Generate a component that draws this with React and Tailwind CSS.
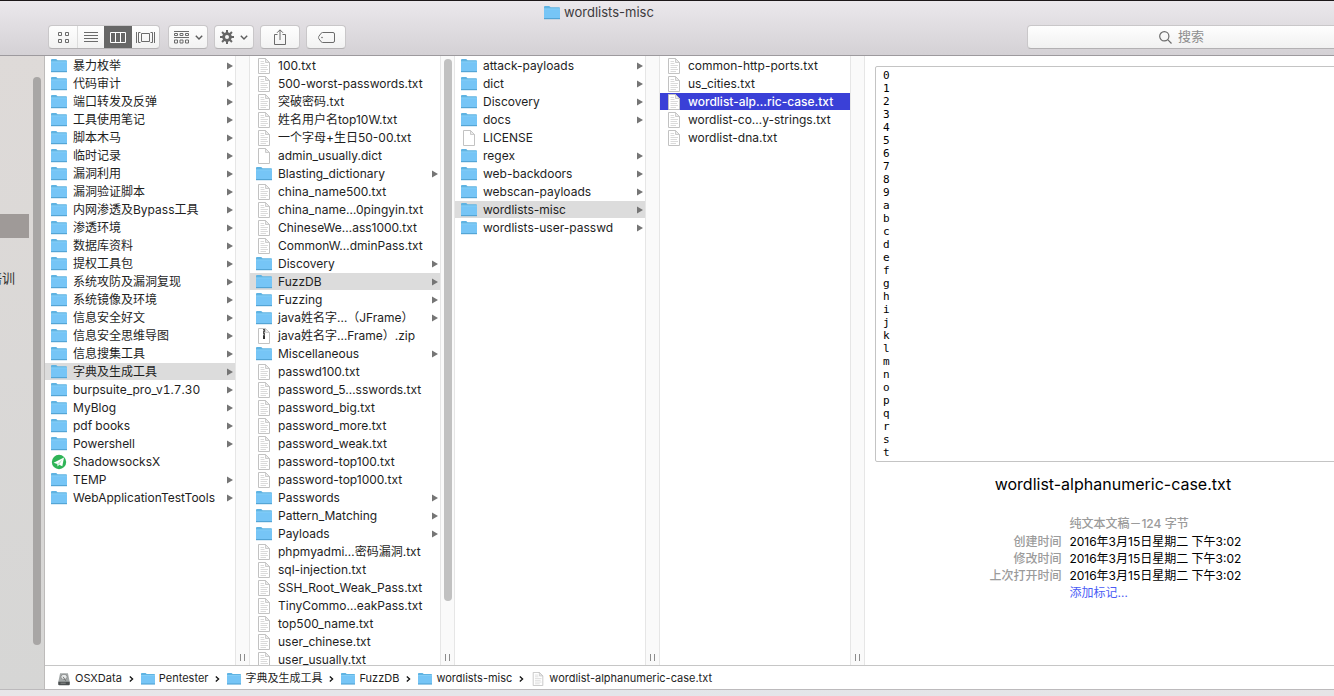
import clsx from "clsx";

const rootItems = [
  { name: "暴力枚举", kind: "folder" },
  { name: "代码审计", kind: "folder" },
  { name: "端口转发及反弹", kind: "folder" },
  { name: "工具使用笔记", kind: "folder" },
  { name: "脚本木马", kind: "folder" },
  { name: "临时记录", kind: "folder" },
  { name: "漏洞利用", kind: "folder" },
  { name: "漏洞验证脚本", kind: "folder" },
  { name: "内网渗透及Bypass工具", kind: "folder" },
  { name: "渗透环境", kind: "folder" },
  { name: "数据库资料", kind: "folder" },
  { name: "提权工具包", kind: "folder" },
  { name: "系统攻防及漏洞复现", kind: "folder" },
  { name: "系统镜像及环境", kind: "folder" },
  { name: "信息安全好文", kind: "folder" },
  { name: "信息安全思维导图", kind: "folder" },
  { name: "信息搜集工具", kind: "folder" },
  { name: "字典及生成工具", kind: "folder", open: true },
  { name: "burpsuite_pro_v1.7.30", kind: "folder" },
  { name: "MyBlog", kind: "folder" },
  { name: "pdf books", kind: "folder" },
  { name: "Powershell", kind: "folder" },
  { name: "ShadowsocksX", kind: "app" },
  { name: "TEMP", kind: "folder" },
  { name: "WebApplicationTestTools", kind: "folder" },
];

const dictItems = [
  { name: "100.txt", kind: "text" },
  { name: "500-worst-passwords.txt", kind: "text" },
  { name: "突破密码.txt", kind: "text" },
  { name: "姓名用户名top10W.txt", kind: "text" },
  { name: "一个字母+生日50-00.txt", kind: "text" },
  { name: "admin_usually.dict", kind: "blank" },
  { name: "Blasting_dictionary", kind: "folder" },
  { name: "china_name500.txt", kind: "text" },
  { name: "china_name…0pingyin.txt", kind: "text" },
  { name: "ChineseWe…ass1000.txt", kind: "text" },
  { name: "CommonW…dminPass.txt", kind: "text" },
  { name: "Discovery", kind: "folder" },
  { name: "FuzzDB", kind: "folder", open: true },
  { name: "Fuzzing", kind: "folder" },
  { name: "java姓名字…（JFrame）", kind: "folder" },
  { name: "java姓名字…Frame）.zip", kind: "zip" },
  { name: "Miscellaneous", kind: "folder" },
  { name: "passwd100.txt", kind: "text" },
  { name: "password_5…sswords.txt", kind: "text" },
  { name: "password_big.txt", kind: "text" },
  { name: "password_more.txt", kind: "text" },
  { name: "password_weak.txt", kind: "text" },
  { name: "password-top100.txt", kind: "text" },
  { name: "password-top1000.txt", kind: "text" },
  { name: "Passwords", kind: "folder" },
  { name: "Pattern_Matching", kind: "folder" },
  { name: "Payloads", kind: "folder" },
  { name: "phpmyadmi…密码漏洞.txt", kind: "text" },
  { name: "sql-injection.txt", kind: "text" },
  { name: "SSH_Root_Weak_Pass.txt", kind: "text" },
  { name: "TinyCommo…eakPass.txt", kind: "text" },
  { name: "top500_name.txt", kind: "text" },
  { name: "user_chinese.txt", kind: "text" },
  { name: "user_usually.txt", kind: "text" },
];

const fuzzItems = [
  { name: "attack-payloads", kind: "folder" },
  { name: "dict", kind: "folder" },
  { name: "Discovery", kind: "folder" },
  { name: "docs", kind: "folder" },
  { name: "LICENSE", kind: "blank" },
  { name: "regex", kind: "folder" },
  { name: "web-backdoors", kind: "folder" },
  { name: "webscan-payloads", kind: "folder" },
  { name: "wordlists-misc", kind: "folder", open: true },
  { name: "wordlists-user-passwd", kind: "folder" },
];

const miscItems = [
  { name: "common-http-ports.txt", kind: "text" },
  { name: "us_cities.txt", kind: "text" },
  { name: "wordlist-alp…ric-case.txt", kind: "text", selected: true },
  { name: "wordlist-co…y-strings.txt", kind: "text" },
  { name: "wordlist-dna.txt", kind: "text" },
];

const pathItems = [
  { name: "OSXData", kind: "disk" },
  { name: "Pentester", kind: "folder" },
  { name: "字典及生成工具", kind: "folder" },
  { name: "FuzzDB", kind: "folder" },
  { name: "wordlists-misc", kind: "folder" },
  { name: "wordlist-alphanumeric-case.txt", kind: "text" },
];

const fileInfo = [
  ["创建时间", "2016年3月15日星期二 下午3:02"],
  ["修改时间", "2016年3月15日星期二 下午3:02"],
  ["上次打开时间", "2016年3月15日星期二 下午3:02"],
];

const previewLines = "0123456789abcdefghijklmnopqrst".split("");

function FolderIcon() {
  return (
    <svg viewBox="0 0 16 16" className="size-full">
      <path d="M0 2Q0 1 1 1H5.2L6.6 2.2H15Q16 2.2 16 3.2V14H0Z" fill="#5fb3e2" />
      <path d="M0 4H16V13.5H0Z" fill="#76c5f6" />
      <path d="M0 3.5H16V4.3H0Z" fill="#8ed4fb" />
      <path d="M0 13.2H16V14.2H0Z" fill="#4f9fd0" />
    </svg>
  );
}

function PageIcon({ kind }) {
  return (
    <svg viewBox="0 0 16 16" className="size-full">
      <path d="M2.5.5H9.5L13.5 4.5V15.5H2.5Z" fill="#fff" stroke="#c2c2c2" />
      <path d="M9.5.5V4.5H13.5Z" fill="#ececec" stroke="#c2c2c2" strokeWidth=".8" />
      {kind === "text" && (
        <path d="M4.5 3.5H8M4.5 5.5H8.5M4.5 7.5H12M4.5 9.5H11M4.5 11.5H12M4.5 13.5H10" stroke="#dadada" />
      )}
      {kind === "zip" && (
        <>
          <path d="M8 1V10" stroke="#555" strokeWidth="2" />
          <path d="M7 2.5H8M8 4.5H9M7 6.5H8M8 8.5H9" stroke="#bbb" strokeWidth=".8" />
          <path d="M7 8H9V11H7Z" fill="#333" />
        </>
      )}
    </svg>
  );
}

function AppIcon() {
  return (
    <svg viewBox="0 0 16 16" className="size-full">
      <circle cx="8" cy="8" r="7.2" fill="#2fb457" />
      <path d="M2.6 8.8 13 3.4 11.3 12.2 8.2 10.8 6.6 12.6 6.3 9.9Z" fill="#fff" />
      <path d="M6.3 9.9 11.6 5.1 8.2 10.8" fill="#bfe8ca" />
    </svg>
  );
}

function DiskIcon() {
  return (
    <svg viewBox="0 0 16 16" className="size-full">
      <path d="M3.5 1.5H12.5L14.5 11V14.5H1.5V11Z" fill="#a3a8a8" />
      <path d="M1.5 11H14.5V14Q14.5 15 13.5 15H2.5Q1.5 15 1.5 14Z" fill="#4b4f50" />
      <ellipse cx="8" cy="5.6" rx="3.6" ry="3" fill="#e7eaea" stroke="#777" strokeWidth=".8" />
      <path d="M7 5.5 10 10" stroke="#666" />
      <path d="M4 12.8H10" stroke="#a5a5a5" strokeWidth=".8" />
    </svg>
  );
}

function ItemIcon({ kind }) {
  if (kind === "folder") return <FolderIcon />;
  if (kind === "app") return <AppIcon />;
  if (kind === "disk") return <DiskIcon />;
  return <PageIcon kind={kind} />;
}

function Column({ label, items, className }) {
  return (
    <ul aria-label={label} className={clsx("w-[190px] shrink-0 flex flex-col gap-px pt-px overflow-hidden", className)}>
      {items.map((item) => (
        <li key={item.name} className="shrink-0">
          <button
            className={clsx(
              "flex w-full h-[17px] items-center gap-1.5 pl-1.5 pr-0.5 text-left whitespace-nowrap",
              item.open && "bg-[#dcdcdc]",
              item.selected && "bg-[#3a40d7] text-white font-medium"
            )}
          >
            <span className="size-4 shrink-0">
              <ItemIcon kind={item.kind} />
            </span>
            <span className="flex-1">{item.name}</span>
            {item.kind === "folder" && (
              <svg viewBox="0 0 6 8" className="w-1.5 h-2 shrink-0">
                <path d="M0 .5 6 4 0 7.5Z" fill="#757575" />
              </svg>
            )}
          </button>
        </li>
      ))}
    </ul>
  );
}

function Gutter({ scroll }) {
  return (
    <div className="w-[15px] shrink-0 flex flex-col items-center justify-between border-x border-[#e6e6e6] bg-[#fafafa] pt-[3px] pb-1">
      {scroll ? <div className="w-2 h-[90%] rounded-full bg-[#c1c1c1]" /> : <div />}
      <div className="w-[5px] h-[7px] border-x border-[#8c8c8c]" />
    </div>
  );
}

function ToolButton({ label, className, children }) {
  return (
    <button
      aria-label={label}
      className={clsx(
        "h-6 w-10 flex items-center justify-center gap-1.5 rounded border border-[#c9c7c9] border-b-[#b3b1b3] bg-linear-to-b from-[#fefefe] to-[#f2f2f2]",
        className
      )}
    >
      {children}
    </button>
  );
}

function Chevron() {
  return (
    <svg viewBox="0 0 8 5" className="w-2 h-[5px]" fill="none" stroke="#5c5c5c" strokeWidth="1.4">
      <path d="M.8.7 4 4 7.2.7" />
    </svg>
  );
}

function ViewSwitch() {
  return (
    <div className="flex h-6 w-28 rounded border border-[#c9c7c9] border-b-[#b3b1b3] bg-linear-to-b from-[#fefefe] to-[#f2f2f2] overflow-hidden">
      <button aria-label="图标" className="w-[29px] flex items-center justify-center border-r border-[#dcdcdc]">
        <svg viewBox="0 0 11 11" className="size-[11px]" fill="none" stroke="#6b6b6b">
          <path d="M.5.5H3.5V3.5H.5ZM7.5.5H10.5V3.5H7.5ZM.5 7.5H3.5V10.5H.5ZM7.5 7.5H10.5V10.5H7.5Z" />
        </svg>
      </button>
      <button aria-label="列表" className="flex-1 flex items-center justify-center">
        <svg viewBox="0 0 14 10" className="w-3.5 h-2.5" stroke="#6b6b6b">
          <path d="M0 .5H14M0 3.5H14M0 6.5H14M0 9.5H14" />
        </svg>
      </button>
      <button aria-label="分栏" aria-pressed="true" className="w-7 flex items-center justify-center bg-[#676767]">
        <svg viewBox="0 0 16 11" className="w-4 h-[11px]" fill="none" stroke="#fff">
          <path d="M.5.5H15.5V10.5H.5ZM5.5.5V10.5M10.5.5V10.5" />
        </svg>
      </button>
      <button aria-label="Cover Flow" className="w-[27px] flex items-center justify-center">
        <svg viewBox="0 0 19 11" className="w-[19px] h-[11px]" fill="none" stroke="#6b6b6b">
          <path d="M.5 0V11M4.5.5H2.5V10.5H4.5M5.5 1.5H13.5V9.5H5.5ZM14.5.5H16.5V10.5H14.5M18.5 0V11" />
        </svg>
      </button>
    </div>
  );
}

function Toolbar() {
  return (
    <header className="h-[56px] shrink-0 border-t border-t-[#1c1719] border-b border-b-[#9d9a9e] bg-linear-to-b from-[#ebe8ec] to-[#d4d1d5] text-[#3c3a3c]">
      <div className="h-6 flex items-center justify-center gap-1">
        <span className="size-4">
          <FolderIcon />
        </span>
        <h1 className="text-[13px]">wordlists-misc</h1>
      </div>
      <div className="flex items-center pl-[211px] pr-6">
        <ViewSwitch />
        <ToolButton label="排列" className="ml-2">
          <svg viewBox="0 0 15 13" className="w-[15px] h-[13px]" fill="none" stroke="#6b6b6b">
            <path d="M0 .5H15M0 6.5H15M.5 2.5H3.5V4.5H.5ZM6 2.5H9V4.5H6ZM11.5 2.5H14.5V4.5H11.5ZM.5 9H3.5V12H.5ZM6 9H9V12H6ZM11.5 9H14.5V12H11.5Z" />
          </svg>
          <Chevron />
        </ToolButton>
        <ToolButton label="操作" className="ml-1.5">
          <svg viewBox="0 0 14 14" className="size-3.5" fill="none" stroke="#666">
            <circle cx="7" cy="7" r="3.4" strokeWidth="2.8" />
            <path
              d="M7 0V3M7 11V14M0 7H3M11 7H14M2.05 2.05 4.2 4.2M9.8 9.8 11.95 11.95M2.05 11.95 4.2 9.8M9.8 4.2 11.95 2.05"
              strokeWidth="2"
            />
          </svg>
          <Chevron />
        </ToolButton>
        <ToolButton label="共享" className="ml-1.5">
          <svg viewBox="0 0 12 16" className="w-3 h-4" fill="none" stroke="#6b6b6b">
            <path d="M3.5 5.5H.5V15.5H11.5V5.5H8.5M6 11V1M3 3.8 6 .8 9 3.8" />
          </svg>
        </ToolButton>
        <ToolButton label="编辑标记" className="ml-1.5">
          <svg viewBox="0 0 17 11" className="w-[17px] h-[11px]" fill="none" stroke="#6b6b6b">
            <path d="M4.6.5H15Q16.5.5 16.5 2V9Q16.5 10.5 15 10.5H4.6Q3.8 10.5 3.2 9.8L.8 6.6Q0 5.5.8 4.4L3.2 1.2Q3.8.5 4.6.5Z" />
            <circle cx="4" cy="5.5" r=".8" fill="#6b6b6b" stroke="none" />
          </svg>
        </ToolButton>
        <label className="ml-auto w-[310px] h-6 flex items-center gap-1.5 rounded border border-[#c9c7c9] border-b-[#b3b1b3] bg-linear-to-b from-[#fefefe] to-[#f1f1f1] pl-[131px]">
          <svg viewBox="0 0 13 13" className="size-[13px] shrink-0" fill="none" stroke="#6b6b6b" strokeWidth="1.2">
            <circle cx="5.3" cy="5.3" r="4.6" />
            <path d="M8.7 8.7 12.5 12.5" />
          </svg>
          <input
            type="search"
            aria-label="搜索"
            placeholder="搜索"
            className="min-w-0 flex-1 text-[13px] bg-transparent outline-none placeholder:text-[#8e8e8e]"
          />
        </label>
      </div>
    </header>
  );
}

function Sidebar() {
  return (
    <aside className="w-[208px] shrink-0 flex justify-end gap-1 pr-[3px] border-r border-[#bdbbba] bg-linear-to-b from-[#dedad8] to-[#d6d6d5] text-[13px] text-[#333]">
      <div className="flex-1 pt-[158px]">
        <div className="h-6 bg-[#9f9a98]" />
        <p className="mt-[30px] pr-3.5 text-right leading-5">安全培训</p>
      </div>
      <div className="w-2 mt-[21px] mb-11 rounded-full bg-[#a8a6a5]" />
    </aside>
  );
}

function Preview() {
  return (
    <section className="flex-1 pt-2.5 text-black">
      <pre className="mx-2.5 h-[396px] rounded-xs border border-[#c4c4c4] pl-[7px] pt-0.5 overflow-hidden font-['DejaVu_Sans_Mono','Liberation_Mono',monospace] text-[11px] leading-[13px]">
        {previewLines.join("\n")}
      </pre>
      <h2 className="mt-2.5 text-center text-base">wordlist-alphanumeric-case.txt</h2>
      <dl className="mt-[19px] grid grid-cols-[2fr_3fr] gap-x-2 pl-0.5 leading-[17px]">
        <dd className="col-start-2 mb-px font-medium text-[#9b9b9b]">纯文本文稿－124 字节</dd>
        {fileInfo.map(([label, value]) => (
          <div key={label} className="contents">
            <dt className="text-right font-medium text-[#9b9b9b]">{label}</dt>
            <dd>{value}</dd>
          </div>
        ))}
        <dd className="col-start-2">
          <a href="#tags" className="text-[#4a5cf5]">
            添加标记…
          </a>
        </dd>
      </dl>
    </section>
  );
}

function PathBar() {
  return (
    <nav aria-label="路径" className="h-6 shrink-0 border-t border-[#c6c6c6] bg-white pl-3 pt-0.5 flex items-center text-[11px]">
      {pathItems.map((item, i) => (
        <div key={item.name} className="flex items-center">
          {i > 0 && (
            <svg viewBox="0 0 5 6" className="w-[5px] h-1.5 mx-[7px]" fill="none" stroke="#111" strokeWidth="1.3">
              <path d="M.8.5 3.6 3 .8 5.5" />
            </svg>
          )}
          <a href="#path" className="flex items-center gap-1 whitespace-nowrap">
            <span className="size-3.5">
              <ItemIcon kind={item.kind} />
            </span>
            {item.name}
          </a>
        </div>
      ))}
    </nav>
  );
}

export default function App() {
  return (
    <div className="h-screen overflow-hidden font-['Inter','Noto_Sans_CJK_SC',sans-serif] text-xs text-[#1e1e1e]">
      {/* the window hangs over both sides of the screen */}
      <div className="h-full -ml-[163px] -mr-[27px] flex flex-col">
        <Toolbar />
        <div className="flex-1 min-h-0 flex">
          <Sidebar />
          <main className="flex-1 min-w-0 flex flex-col bg-white">
            <div className="flex-1 min-h-0 flex">
              <Column label="Pentester" items={rootItems} className="tabular-nums" />
              <Gutter />
              <Column label="字典及生成工具" items={dictItems} />
              <Gutter scroll />
              <Column label="FuzzDB" items={fuzzItems} />
              <Gutter />
              <Column label="wordlists-misc" items={miscItems} />
              <Gutter />
              <Preview />
            </div>
            <PathBar />
          </main>
        </div>
        <footer className="h-[7px] shrink-0 border-t border-[#bcbabc] bg-linear-to-r from-[#e9e6e8] via-[#e3e6ea] to-[#e6e4e6]" />
      </div>
    </div>
  );
}
